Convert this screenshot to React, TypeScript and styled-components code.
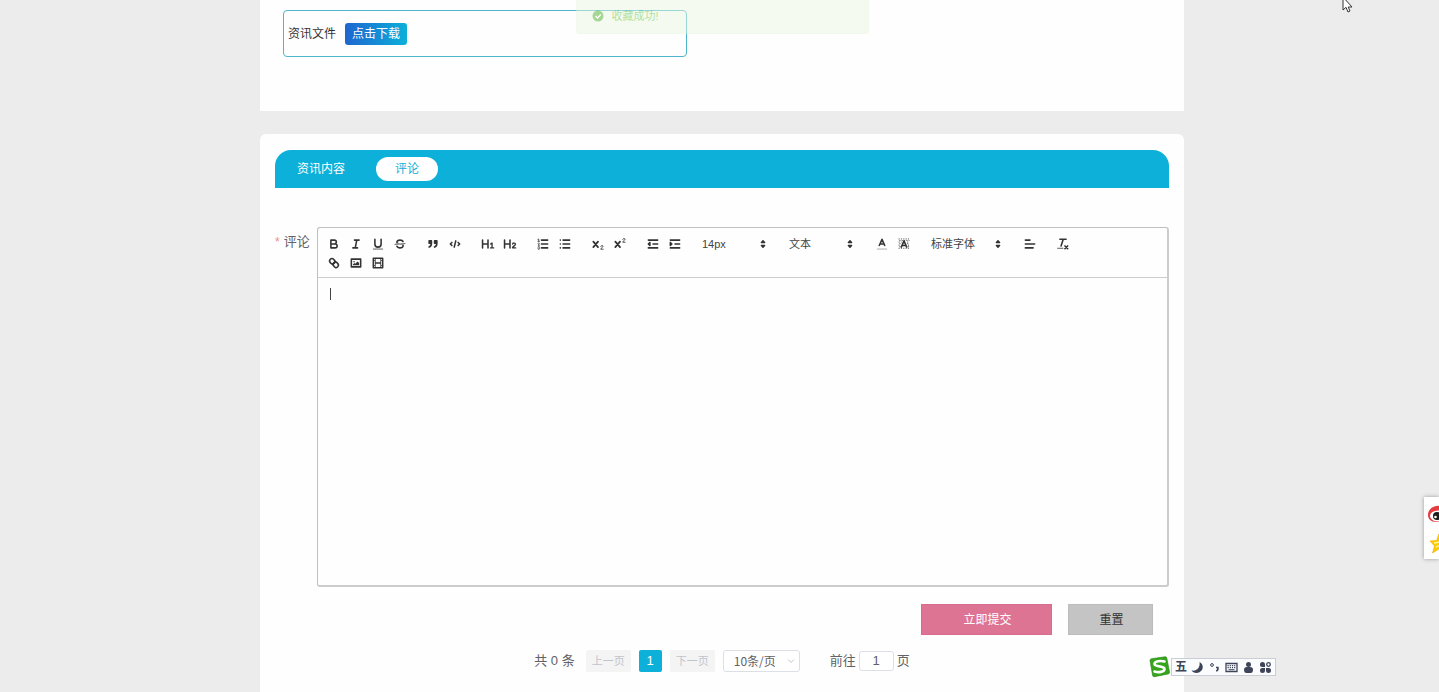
import React from "react";
import styled, { createGlobalStyle, css } from "styled-components";

const GlobalStyle = createGlobalStyle`
  *, *::before, *::after { box-sizing: border-box; }
  body {
    margin: 0;
    background: #ececec;
    color: #606266;
    font-family: "Liberation Sans", "Noto Sans CJK SC", sans-serif;
    font-size: 13px;
    line-height: 20px;
    overflow: hidden;
  }
  button, input, select, textarea { font: inherit; color: inherit; margin: 0; }
`;

const Page = styled.main`
  display: flex;
  flex-direction: column;
  align-items: center;
  gap: 23px;
  min-height: 100vh;
  padding-left: 5px;
`;

const Card = styled.section`
  width: 100%;
  max-width: 924px;
  background: #fefefe;
`;

const FileCard = styled(Card)`
  padding: 10px 23px 54px;
`;

const FileBox = styled.div`
  display: flex;
  align-items: center;
  gap: 9px;
  width: 46%;
  height: 47px;
  padding-left: 4px;
  border: 1px solid #4db6cc;
  border-radius: 4px;
  color: #333;
  font-size: 12px;
`;

const DownloadButton = styled.button`
  height: 22px;
  padding: 0 7px;
  border: 0;
  border-radius: 3px;
  background: linear-gradient(90deg, #1e66d0, #0cb0d9);
  color: #fff;
  font-size: 12px;
  line-height: 20px;
`;

const CommentCard = styled(Card)`
  flex: 1;
  padding: 16px 15px 20px;
  border-radius: 6px 6px 0 0;
`;

const TabBar = styled.nav`
  display: flex;
  align-items: center;
  gap: 12px;
  height: 38px;
  padding-left: 3px;
  border-radius: 16px 16px 0 0;
  background: #0cb0d9;
`;

const Tab = styled.button<{ $active?: boolean }>`
  height: 24px;
  padding: 0 19px;
  border: 0;
  border-radius: 12px;
  background: ${(p) => (p.$active ? "#fff" : "transparent")};
  color: ${(p) => (p.$active ? "#0cb0d9" : "#fff")};
  font-size: 12px;
`;

const Field = styled.div`
  display: flex;
  margin-top: 39px;
`;

const FieldLabel = styled.label`
  flex: none;
  width: 42px;
  padding-top: 5px;
`;

const Required = styled.span`
  margin-right: 4px;
  color: #f08c8c;
  font-size: 12px;
`;

const Editor = styled.div`
  flex: 1;
  min-width: 0;
  border: 1px solid #c0c0c0;
  border-right: 2px solid #ccc;
  border-bottom: 2px solid #ccc;
  border-radius: 3px;
`;

const Toolbar = styled.div`
  display: flex;
  flex-direction: column;
  padding: 6px 5px 5px;
  border-bottom: 1px solid #ccc;
`;

const ToolRow = styled.div`
  display: flex;
  gap: 11px;
  height: 19px;
`;

const ToolGroup = styled.div`
  display: flex;
`;

const ToolButton = styled.button`
  display: flex;
  align-items: center;
  justify-content: center;
  width: 22px;
  height: 19px;
  padding: 0;
  border: 0;
  background: none;
`;

const ToolIcon = styled.svg`
  width: 14px;
  height: 14px;
  fill: none;
  stroke: #333;
  stroke-width: 2;
  stroke-linecap: round;
  stroke-linejoin: round;
  .thin { stroke-width: 1; }
  .fill { fill: #333; stroke: none; }
  .both { fill: #333; }
  .pale { stroke: #999; stroke-width: 1; }
`;

const Picker = styled.div<{ $width: number }>`
  position: relative;
  width: ${(p) => p.$width}px;
  height: 19px;
`;

const PickerSelect = styled.select`
  appearance: none;
  width: 100%;
  height: 19px;
  padding: 0 0 0 5px;
  border: 0;
  background: none;
  color: #444;
  font-size: 11px;
  line-height: 19px;
`;

const PickerArrow = styled(ToolIcon)`
  position: absolute;
  top: 3px;
  right: 3px;
  pointer-events: none;
`;

const Writing = styled.div`
  position: relative;
  height: 307px;
`;

const WritingArea = styled.textarea`
  display: block;
  width: 100%;
  height: 100%;
  padding: 8px 12px;
  border: 0;
  outline: 0;
  resize: none;
  background: transparent;
`;

const Caret = styled.span`
  position: absolute;
  top: 10px;
  left: 12px;
  width: 1px;
  height: 12px;
  background: #444;
`;

const Actions = styled.div`
  display: flex;
  justify-content: flex-end;
  gap: 16px;
  margin-top: 17px;
  padding-right: 16px;
`;

const ActionButton = styled.button<{ $primary?: boolean }>`
  width: ${(p) => (p.$primary ? 131 : 85)}px;
  height: 31px;
  padding: 0 0 0 2px;
  border: 1px solid ${(p) => (p.$primary ? "#d96c8e" : "#bcbcbc")};
  background: ${(p) => (p.$primary ? "#de7494" : "#c4c4c4")};
  color: ${(p) => (p.$primary ? "#fff" : "#333")};
  font-size: 12px;
`;

const Pagination = styled.nav`
  display: flex;
  align-items: center;
  justify-content: center;
  gap: 8px;
  height: 22px;
  margin-top: 15px;
`;

const Total = styled.span`
  margin-right: 3px;
`;

const PageButton = styled.button<{ $current?: boolean }>`
  height: 22px;
  padding: 0;
  border: 0;
  border-radius: 2px;
  width: 45px;
  background: #f4f4f5;
  color: #c0c4cc;
  font-size: 11px;
  ${(p) =>
    p.$current &&
    css`
      width: 23px;
      background: #0cb0d9;
      color: #fff;
      font-size: 13px;
    `}
`;

const SizeBox = styled.div`
  position: relative;
  width: 77px;
  height: 22px;
`;

const SizeSelect = styled.select`
  appearance: none;
  width: 100%;
  height: 22px;
  padding: 0 0 0 10px;
  border: 1px solid #dcdfe6;
  border-radius: 3px;
  background: #fff;
  font-family: "Noto Sans CJK SC", sans-serif;
  font-size: 12px;
  line-height: 20px;
`;

const Chevron = styled.svg`
  position: absolute;
  top: 7px;
  right: 5px;
  width: 8px;
  height: 8px;
  fill: none;
  stroke: #c0c4cc;
  pointer-events: none;
`;

const Jump = styled.label`
  display: flex;
  align-items: center;
  gap: 3px;
  margin-left: 22px;
`;

const JumpInput = styled.input`
  width: 35px;
  height: 20px;
  padding: 0;
  border: 1px solid #dcdfe6;
  border-radius: 3px;
  background: #fff;
  text-align: center;
`;

const Toast = styled.div`
  position: fixed;
  top: -3px;
  left: 40%;
  display: flex;
  align-items: center;
  gap: 8px;
  width: 293px;
  height: 37px;
  padding-left: 15px;
  border: 1px solid #e1f3d8;
  border-radius: 3px;
  background: #e9f6e2;
  color: #67c23a;
  font-size: 11px;
  opacity: 0.5;
`;

const ToastIcon = styled.svg`
  width: 12px;
  height: 12px;
`;

const ShareDock = styled.aside`
  position: fixed;
  top: 497px;
  right: 0;
  width: 15px;
  height: 62px;
  overflow: hidden;
  background: #fff;
  box-shadow: 0 0 4px rgba(0, 0, 0, 0.35);
  svg { display: block; }
`;

const Ime = styled.aside`
  position: fixed;
  right: 163px;
  bottom: 14px;
  display: flex;
  align-items: center;
  gap: 1px;
  height: 22px;
`;

const ImeBar = styled.div`
  display: flex;
  align-items: center;
  gap: 4px;
  height: 18px;
  padding: 0 3px;
  border: 1px solid #c9cdd6;
  background: #fbfcfe;
  color: #3f4558;
  font-size: 12px;
  font-weight: 700;
  line-height: 16px;
  svg { width: 13px; height: 13px; display: block; }
`;

const Pointer = styled.svg`
  position: fixed;
  top: -4px;
  right: 86px;
  width: 11px;
  height: 18px;
`;

const icons: Record<string, React.ReactNode> = {
  加粗: <path d="M5 4h4.500a2.500 2.500 0 0 1 0 5H5zM5 9h5.500a2.500 2.500 0 0 1 0 5H5z" />,
  斜体: <path d="M7 4h6M5 14h6M8 14l2-10" />,
  下划线: (
    <>
      <path d="M5 3v6a4 4 0 0 0 8 0V3" />
      <path className="thin" d="M3 15.500h12" />
    </>
  ),
  删除线: (
    <>
      <path className="thin" d="M15.500 8.500l-13 1" />
      <path className="fill" d="M9 8C6.500 7.800 6 7.500 6 6.500 6 5.800 7.300 5 9 5c1.600 0 2.800.7 3 1.300a1 1 0 0 0 1.900-.6C13.400 4.100 11.400 3 9 3 6.200 3 4 4.500 4 6.500a3.200 3.200 0 0 0 .5 1.800zM9 10c2.500.2 3 .5 3 1.500 0 .7-1.300 1.500-3 1.500-1.600 0-2.800-.7-3-1.300a1 1 0 1 0-1.900.6C4.600 13.900 6.600 15 9 15c2.800 0 5-1.500 5-3.500a3.200 3.200 0 0 0-.5-1.800z" />
    </>
  ),
  引用: <path className="both" d="M4 5h3v3H4zM11 5h3v3h-3zM7 8c0 4-3 5-3 5M14 8c0 4-3 5-3 5" />,
  代码: <path d="M5 7L3 9l2 2M13 7l2 2-2 2M10 5L8 13" />,
  一级标题: (
    <>
      <path d="M2 4v10M9 4v10M2 9h7" />
      <path strokeWidth="1.700" d="M12.300 9l1.900-1.200V14M12.300 14h4" />
    </>
  ),
  二级标题: (
    <>
      <path d="M2 4v10M9 4v10M2 9h7" />
      <path strokeWidth="1.700" d="M12.300 9c.2-1.700 3.700-1.700 3.700.3 0 1.600-3.600 2.700-3.700 4.700h4" />
    </>
  ),
  有序列表: (
    <>
      <path d="M7 4h8M7 9h8M7 14h8" />
      <path className="thin" d="M2.500 3l1-.5v3M2.500 5.500h2M4.500 10.500h-2c0-.2 1.800-1 1.800-2.200a1 1 0 0 0-1.800-.2M2.500 14.800a1 1 0 1 0 1.200-.8 1 1 0 1 0-1.200-.8" />
    </>
  ),
  无序列表: <path d="M6.500 4H15M6.500 9H15M6.500 14H15M3 4h0M3 9h0M3 14h0" />,
  下标: (
    <>
      <path strokeWidth="2.300" d="M3 6l6 7M9 6l-6 7" />
      <path strokeWidth="1.100" d="M12.500 12c.2-1.400 3-1.400 3 0 0 1.200-2.800 2-3 3.700h3.200" />
    </>
  ),
  上标: (
    <>
      <path strokeWidth="2.300" d="M3 6l6 7M9 6l-6 7" />
      <path strokeWidth="1.100" d="M12.500 3c.2-1.400 3-1.400 3 0 0 1.200-2.800 2-3 3.700h3.200" />
    </>
  ),
  减少缩进: (
    <>
      <path d="M3 4h12M3 14h12M9 9h6" />
      <path className="both" d="M5 7v4L3 9z" />
    </>
  ),
  增加缩进: (
    <>
      <path d="M3 4h12M3 14h12M9 9h6" />
      <path className="both" d="M3 7v4l2-2z" />
    </>
  ),
  文字颜色: (
    <>
      <path d="M5.500 11L9 3l3.500 8M6.500 9h5" />
      <path className="pale" d="M3 15.500h12" />
    </>
  ),
  背景颜色: (
    <>
      <path strokeWidth="1" strokeLinecap="butt" strokeDasharray="1.500 1.500" d="M2 2.500h14M3 4.500h13M2 6.500h4M13 6.500h3M3 8.500h3M13 8.500h3M2 10.500h3M14 10.500h2M3 12.500h2M14 12.500h2M2 14.500h14" />
      <path d="M5.500 13L9 5l3.500 8M6.500 11h5" />
    </>
  ),
  对齐: <path d="M3 4h6M3 9h12M3 14h10" />,
  清除格式: (
    <>
      <path d="M5 3h8M6.500 11.500L9.300 3M11.500 11.500L15 15M15 11.500L11.500 15" />
      <path className="thin" d="M2 14.500h7" />
    </>
  ),
  链接: (
    <>
      <path d="M7 11l4-4" />
      <path d="M8.900 4.577a3.476 3.476 0 0 1 .36 4.679A3.476 3.476 0 0 1 4.577 8.900C3.185 7.500 2.035 6.400 4.217 4.217S7.500 3.185 8.900 4.577z" />
      <path d="M13.423 9.100a3.476 3.476 0 0 0-4.679-.36 3.476 3.476 0 0 0 .36 4.679c1.392 1.392 2.500 2.542 4.679.36s1.032-3.279-.36-4.679z" />
    </>
  ),
  图片: (
    <>
      <path d="M3 4h12v10H3z" />
      <circle className="fill" cx="6.500" cy="7.500" r="1" />
      <path className="fill" d="M5 12v-1l2-2 1 1 3-3 2 2v3z" />
    </>
  ),
  视频: (
    <>
      <path d="M3 3h12v12H3z" />
      <path className="fill" d="M5 3h1v12H5zM12 3h1v12h-1zM5 8h8v2H5zM3 5h3v1H3zM3 12h3v1H3zM12 5h3v1h-3zM12 12h3v1h-3z" />
    </>
  ),
};

function Tools({ names }: { names: string[] }) {
  return (
    <ToolGroup>
      {names.map((name) => (
        <ToolButton key={name} type="button" aria-label={name}>
          <ToolIcon viewBox="0 0 18 18">{icons[name]}</ToolIcon>
        </ToolButton>
      ))}
    </ToolGroup>
  );
}

function ToolPicker({ label, value, width }: { label: string; value: string; width: number }) {
  return (
    <Picker $width={width}>
      <PickerSelect aria-label={label}>
        <option>{value}</option>
      </PickerSelect>
      <PickerArrow viewBox="0 0 18 18">
        <path className="both" d="M7 11l2 2 2-2zM7 7l2-2 2 2z" />
      </PickerArrow>
    </Picker>
  );
}

export default function App() {
  return (
    <>
      <GlobalStyle />
      <Page>
        <FileCard>
          <FileBox>
            <span>资讯文件</span>
            <DownloadButton type="button">点击下载</DownloadButton>
          </FileBox>
        </FileCard>
        <CommentCard>
          <TabBar>
            <Tab type="button">资讯内容</Tab>
            <Tab type="button" $active>评论</Tab>
          </TabBar>
          <Field>
            <FieldLabel htmlFor="comment">
              <Required>*</Required>评论
            </FieldLabel>
            <Editor>
              <Toolbar>
                <ToolRow>
                  <Tools names={["加粗", "斜体", "下划线", "删除线"]} />
                  <Tools names={["引用", "代码"]} />
                  <Tools names={["一级标题", "二级标题"]} />
                  <Tools names={["有序列表", "无序列表"]} />
                  <Tools names={["下标", "上标"]} />
                  <Tools names={["减少缩进", "增加缩进"]} />
                  <ToolPicker label="字号" value="14px" width={76} />
                  <ToolPicker label="段落" value="文本" width={76} />
                  <Tools names={["文字颜色", "背景颜色"]} />
                  <ToolPicker label="字体" value="标准字体" width={82} />
                  <Tools names={["对齐"]} />
                  <Tools names={["清除格式"]} />
                </ToolRow>
                <ToolRow>
                  <Tools names={["链接", "图片", "视频"]} />
                </ToolRow>
              </Toolbar>
              <Writing>
                <WritingArea id="comment" />
                <Caret />
              </Writing>
            </Editor>
          </Field>
          <Actions>
            <ActionButton type="button" $primary>立即提交</ActionButton>
            <ActionButton type="button">重置</ActionButton>
          </Actions>
          <Pagination>
            <Total>共 0 条</Total>
            <PageButton type="button" disabled>上一页</PageButton>
            <PageButton type="button" $current>1</PageButton>
            <PageButton type="button" disabled>下一页</PageButton>
            <SizeBox>
              <SizeSelect aria-label="每页条数">
                <option>10条/页</option>
              </SizeSelect>
              <Chevron viewBox="0 0 8 8"><path d="M1 2.500l3 3 3-3" /></Chevron>
            </SizeBox>
            <Jump>
              前往
              <JumpInput defaultValue="1" />
              页
            </Jump>
          </Pagination>
        </CommentCard>
      </Page>

      <Toast role="status">
        <ToastIcon viewBox="0 0 12 12">
          <circle cx="6" cy="6" r="5.500" fill="#4fae2a" />
          <path d="M3.500 6l2 2 3.300-3.500" fill="none" stroke="#fff" strokeWidth="1.300" />
        </ToastIcon>
        <span>收藏成功!</span>
      </Toast>

      <ShareDock>
        <svg width="24" height="62" viewBox="0 0 24 62">
          <path d="M4 18C4 12 10 8 16 9c4 .5 7 3 8 6v10H12c-5 0-8-3-8-7z" fill="#e33b3f" />
          <ellipse cx="14" cy="19" rx="8" ry="5.500" fill="#fff" />
          <circle cx="13" cy="19" r="4" fill="#1c1c1c" />
          <circle cx="11.500" cy="20" r="1.300" fill="#fff" />
          <path d="M15 37l3 7 7 .5-5.500 4.500 2 7-6.500-4-6.500 4 2-7L6 44l6.500-.5z" fill="#fc0" stroke="#efa500" strokeWidth=".6" />
          <path d="M10 46l7-1M12 50l5-2" stroke="#fff3a0" strokeWidth="1.500" />
        </svg>
      </ShareDock>

      <Ime>
        <svg width="21" height="22" viewBox="0 0 21 22">
          <path d="M1 4.500Q1 3 2.500 2.700L16 .8q1.500-.2 1.800 1.200L20.500 16q.2 1.500-1.200 1.900L5.500 20.700q-1.500.3-1.900-1.200z" fill="#35a51c" stroke="#228312" strokeWidth=".6" />
          <path d="M15.500 5.500C12 4.500 5.500 5 5.500 8c0 3.200 10 1.500 10 5 0 3-6 3.800-10 2.500" fill="none" stroke="#fff" strokeWidth="2.600" strokeLinecap="round" />
        </svg>
        <ImeBar>
          <span>五</span>
          <svg viewBox="0 0 13 13"><path d="M8.500 1c6 3.500 3 11 -3 11-2.300 0-4-1-5-2.500 5 1 9-3 8-8.500z" fill="#3f4558" /></svg>
          <svg viewBox="0 0 13 13"><circle cx="4" cy="4" r="1.400" fill="none" stroke="#3f4558" /><path d="M8 6.500h2c.3 2-.5 3-1.800 3.500" fill="none" stroke="#3f4558" strokeWidth="1.500" /></svg>
          <svg viewBox="0 0 13 13"><path d="M1 2.500h11v8H1z" fill="none" stroke="#3f4558" strokeWidth="1.300" /><path d="M2.500 4.700h8M2.500 6.700h8" stroke="#3f4558" strokeWidth="1.200" strokeDasharray="1.200 1" /><path d="M3.500 8.700h6" stroke="#3f4558" /></svg>
          <svg viewBox="0 0 13 13"><circle cx="6.500" cy="3.500" r="2.500" fill="#3f4558" /><path d="M2 8.500Q2 6 5 6h3q3 0 3 2.500 0 3.500-2.500 3.500h-4Q2 12 2 8.500z" fill="#3f4558" /></svg>
          <svg viewBox="0 0 13 13"><path d="M1 3.500a2.300 2.300 0 1 1 5 0V6H3.500A2.400 2.400 0 0 1 1 3.500zM1 9.500a2.300 2.300 0 1 0 5 0V7H3.500A2.400 2.400 0 0 0 1 9.500zM12 9.500a2.300 2.300 0 1 1-5 0V7h2.500A2.400 2.400 0 0 1 12 9.500z" fill="#3f4558" /><circle cx="9.500" cy="3.500" r="1.800" fill="none" stroke="#3f4558" strokeWidth="1.300" /></svg>
        </ImeBar>
      </Ime>

      <Pointer viewBox="0 0 11 18">
        <path d="M1 1v13l3-2.700L6 16l2-1-1.800-4H10z" fill="#fff" stroke="#333" />
      </Pointer>
    </>
  );
}
